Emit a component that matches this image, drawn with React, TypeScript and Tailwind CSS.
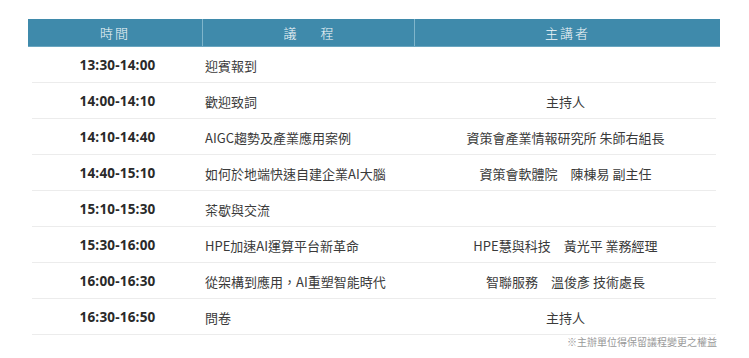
import React from "react";

const rows: [string, string, string][] = [
  ["13:30-14:00", "迎賓報到", ""],
  ["14:00-14:10", "歡迎致詞", "主持人"],
  ["14:10-14:40", "AIGC趨勢及產業應用案例", "資策會產業情報研究所 朱師右組長"],
  ["14:40-15:10", "如何於地端快速自建企業AI大腦", "資策會軟體院　陳棟易 副主任"],
  ["15:10-15:30", "茶歇與交流", ""],
  ["15:30-16:00", "HPE加速AI運算平台新革命", "HPE慧與科技　黃光平 業務經理"],
  ["16:00-16:30", "從架構到應用，AI重塑智能時代", "智聯服務　溫俊彥 技術處長"],
  ["16:30-16:50", "問卷", "主持人"],
];

const cjk = { fontFamily: '"Noto Sans CJK TC", "Noto Sans", sans-serif' };
const num = { fontFamily: '"Open Sans", "Noto Sans", sans-serif' };

export default function App() {
  return (
    <div className="w-[749px] h-[358px] bg-white overflow-hidden" style={cjk}>
      <div className="ml-[28px] mt-[19px] w-[692px]">
        <div className="grid grid-cols-[175px_212px_305px] h-[28px] bg-[#3f8aab] border-b border-[#6aa6c0] text-[#f4f8fa] text-[13px] font-light">
          <div className="flex items-center justify-center tracking-[2px] border-r border-[#7fb5cb]">時間</div>
          <div className="flex items-center justify-center border-r border-[#7fb5cb]">
            <span className="mr-[24px]">議</span>
            <span>程</span>
          </div>
          <div className="flex items-center justify-center tracking-[2px]">主講者</div>
        </div>
        {rows.map((r, i) => (
          <div key={i} className="mx-[4px] grid grid-cols-[171px_212px_301px] h-[36px] border-b border-[#ececec] text-[#3a3a3a] text-[13px] pt-[2px]">
            <div className="flex items-center justify-center font-bold text-[13.5px] text-[#2a2a2a] tracking-[0.2px]" style={num}>{r[0]}</div>
            <div className="flex items-center pl-[2px]">{r[1]}</div>
            <div className="flex items-center justify-center">{r[2]}</div>
          </div>
        ))}
        <div className="flex justify-end pr-[3px] text-[10px] text-[#999] leading-[14px] pt-[0px]">※主辦單位得保留議程變更之權益</div>
      </div>
    </div>
  );
}
